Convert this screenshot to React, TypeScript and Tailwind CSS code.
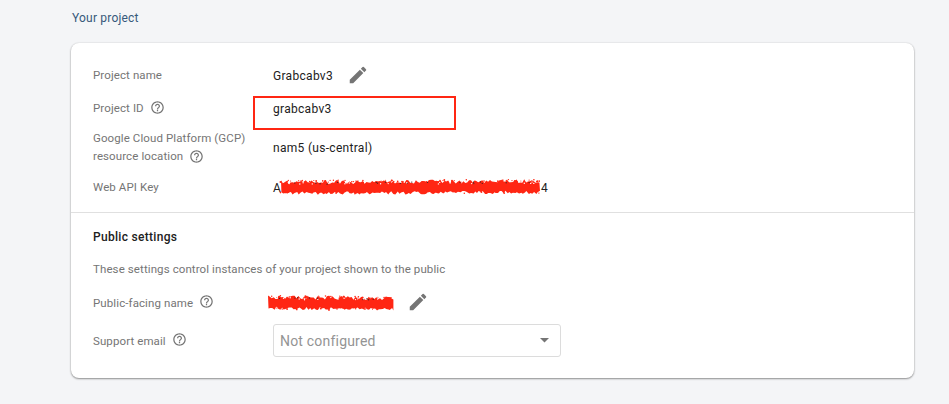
import type { ReactNode } from "react";

function HelpIcon() {
  return (
    <svg className="mb-[2px] ml-[6px] size-[15px] shrink-0 fill-[#757575]" viewBox="0 0 24 24">
      <path d="M11 18h2v-2h-2v2zm1-16C6.48 2 2 6.48 2 12s4.48 10 10 10 10-4.48 10-10S17.52 2 12 2zm0 18c-4.41 0-8-3.59-8-8s3.59-8 8-8 8 3.59 8 8-3.59 8-8 8zm0-14c-2.21 0-4 1.79-4 4h2c0-1.1.9-2 2-2s2 .9 2 2c0 2-3 1.75-3 5h2c0-2.25 3-2.5 3-5 0-2.21-1.79-4-4-4z" />
    </svg>
  );
}

function PencilIcon() {
  return (
    <svg className="size-[22px] shrink-0 fill-[#757575]" viewBox="0 0 24 24">
      <path d="M3 17.25V21h3.75L17.81 9.94l-3.75-3.75L3 17.25zM20.71 7.04a.996.996 0 0 0 0-1.41l-2.34-2.34a.996.996 0 0 0-1.41 0l-1.83 1.83 3.75 3.75 1.83-1.83z" />
    </svg>
  );
}

// Hand-drawn marker strokes: a solid core with ragged edges and stray flecks.
function Scribble({ width, seed, slope }: { width: number; seed: number; slope: number }) {
  let s = seed;
  const rnd = () => {
    s = (s * 16807) % 2147483647;
    return s / 2147483647;
  };
  const top: string[] = [];
  const bottom: string[] = [];
  for (let x = 1; x <= width; x += 1.9) {
    const y = (x / width) * slope;
    top.push(`${x.toFixed(1)},${(1.2 + y + rnd() * 4).toFixed(1)}`);
    bottom.unshift(`${(x + rnd()).toFixed(1)},${(12.6 + y + rnd() * 3.4).toFixed(1)}`);
  }
  const dots: { x: number; y: number; c: string; r: number }[] = [];
  for (let i = 0; i < width * 0.4; i++) {
    const x = rnd() * width;
    const edge = rnd();
    const y = (edge < 0.7 ? 1.4 + rnd() * 2.5 : 13 + rnd() * 2.5) + (x / width) * slope;
    dots.push({ x, y, c: "#ff2613", r: 0.5 + rnd() * 0.5 });
  }
  for (let i = 0; i < width / 7; i++) {
    const x = 6 + rnd() * (width - 12);
    dots.push({ x, y: 3.5 + rnd() * 2 + (x / width) * slope, c: i % 2 ? "#5b2420" : "#ffffff", r: 0.7 });
  }
  return (
    <svg width={width} height="17" className="shrink-0 overflow-visible">
      <polygon points={[...top, ...bottom].join(" ")} fill="#ff2613" />
      {dots.map((d, i) => (
        <circle key={i} cx={d.x.toFixed(1)} cy={d.y.toFixed(1)} r={d.r.toFixed(2)} fill={d.c} />
      ))}
    </svg>
  );
}

function Row({ label, help, className, children }: { label: ReactNode; help?: boolean; className: string; children: ReactNode }) {
  return (
    <div className={`flex items-center ${className}`}>
      <div className="flex w-[180px] shrink-0 items-center whitespace-nowrap text-[11.5px] tracking-[0.1px] text-[#757575]">
        <span>{label}</span>
        {help && <HelpIcon />}
      </div>
      {children}
    </div>
  );
}

export default function App() {
  return (
    <div className="h-[404px] w-[949px] overflow-hidden bg-[#f4f5f7] font-['Roboto',sans-serif] text-[12px] leading-[18px] tracking-[0.3px] text-[#212121]">
      <h2 className="ml-[71px] flex h-[43px] items-start pt-[9px] pl-px text-[12px] tracking-[0.2px] text-[#37597b]">Your project</h2>
      <div className="ml-[71px] h-[335px] w-[843px] rounded-lg bg-white shadow-[0_1px_2px_rgba(0,0,0,0.4),0_0_2px_rgba(0,0,0,0.12)]">
        <section className="h-[170px] border-b border-[#e0e0e0] px-[22px] pt-4">
          <Row label="Project name" className="h-8">
            <span className="pt-[2px]">Grabcabv3</span>
            <span className="ml-[14px]"><PencilIcon /></span>
          </Row>
          <Row label="Project ID" help className="relative h-[34px]">
            <span className="pt-[2px]">grabcabv3</span>
            <div className="absolute top-[5px] left-[160px] h-[34px] w-[203px] border-2 border-[#ff2613]" />
          </Row>
          <Row
            label={
              <>
                <span className="block">Google Cloud Platform (GCP)</span>
                <span className="flex h-[18px] items-center">
                  resource location
                  <span className="pt-[2px]"><HelpIcon /></span>
                </span>
              </>
            }
            className="h-11"
          >
            <span className="pt-[2px]">nam5 (us-central)</span>
          </Row>
          <Row label="Web API Key" className="h-9">
            <span className="w-[7px] pt-[2px]">A</span>
            <Scribble width={261} seed={4177} slope={-1} />
            <span className="pt-[2px]">4</span>
          </Row>
        </section>
        <section className="px-[22px]">
          <h3 className="flex h-12 items-center font-medium">Public settings</h3>
          <p className="h-4 text-[11.5px] leading-4 tracking-[0.1px] text-[#757575]">These settings control instances of your project shown to the public</p>
          <Row label={<span className="block pt-[2px]">Public-facing name</span>} help className="mt-1 h-[42px]">
            <span className="-ml-[6px] flex"><Scribble width={127} seed={9241} slope={1} /></span>
            <span className="ml-[13px]"><PencilIcon /></span>
          </Row>
          <Row label={<span className="block pt-[2px]">Support email</span>} help className="h-[34px]">
            <div className="mt-px flex h-[33px] w-[288px] items-center justify-between rounded-[3px] border border-[#dcdcdc] pr-[11px] pl-[6px] text-[14px] tracking-[0.2px] text-[#949494]">
              <span>Not configured</span>
              <svg width="9" height="5" viewBox="0 0 9 5" className="fill-[#757575]"><path d="M0 0h9L4.5 4.5z" /></svg>
            </div>
          </Row>
        </section>
      </div>
    </div>
  );
}
